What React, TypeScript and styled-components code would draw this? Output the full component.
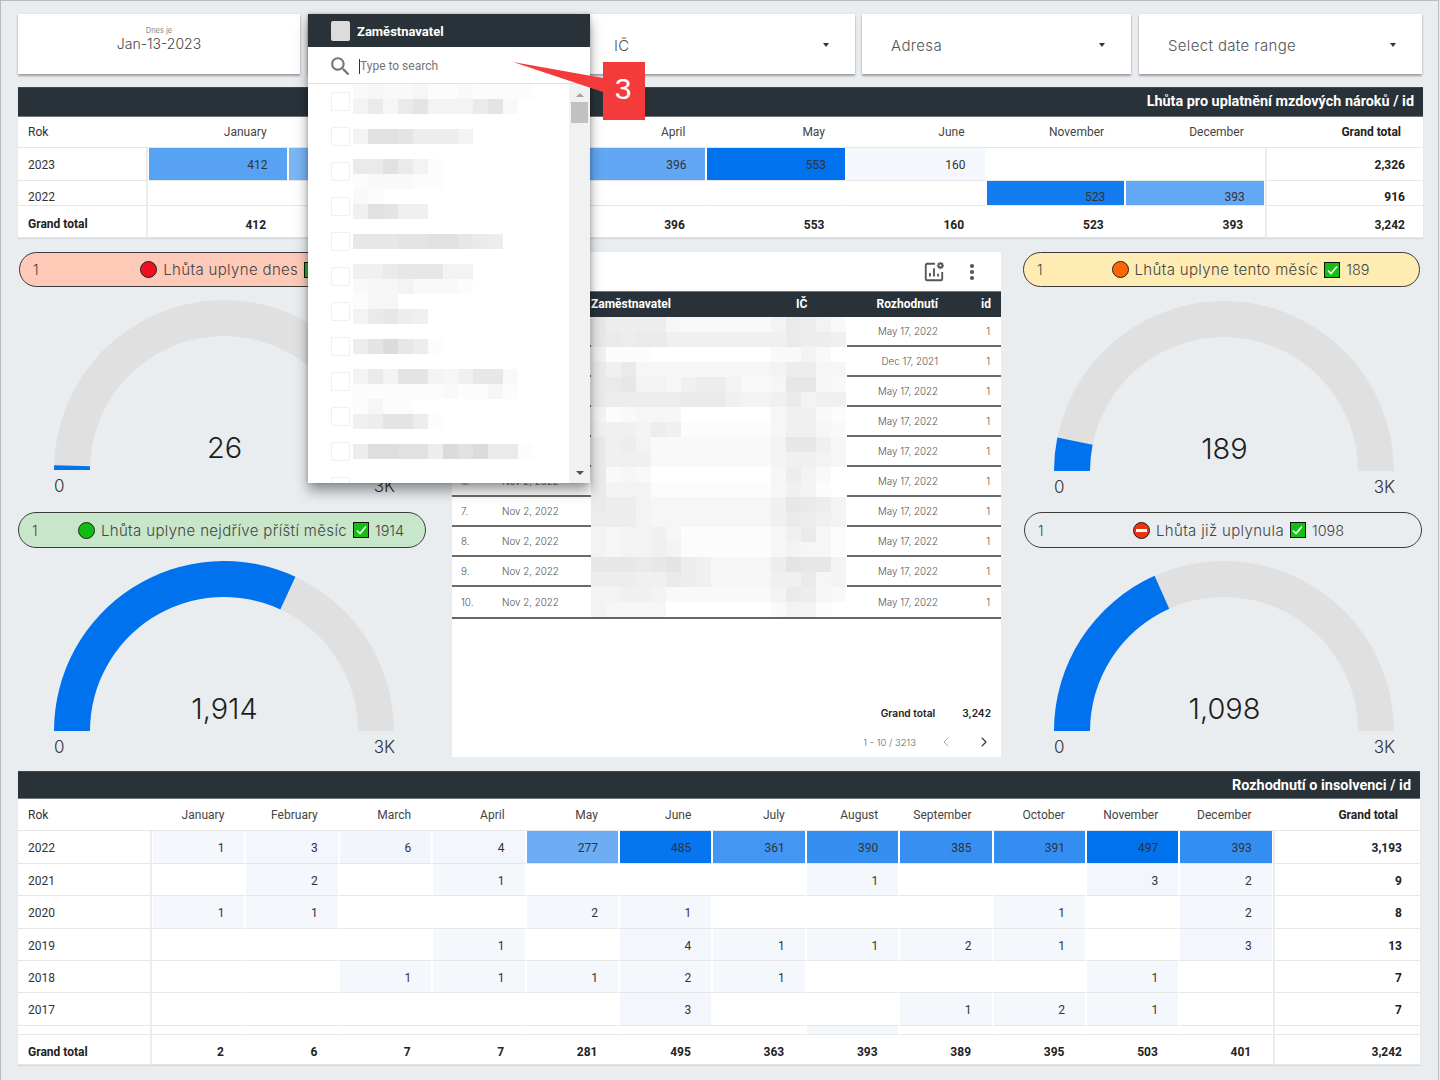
import React from "react";
import styled, { createGlobalStyle } from "styled-components";
import { ChevronLeft, ChevronRight } from "lucide-react";

const GEO = `Inter, "Open Sans", sans-serif`;
const DARK = "#283238";

const Global = createGlobalStyle`
  html, body { margin: 0; padding: 0; background: #eaedf0; }
  body { font-family: Roboto, "Liberation Sans", sans-serif; }
  * { box-sizing: border-box; }
`;

const Page = styled.div`
  position: relative;
  width: 1439px;
  height: 1080px;
  overflow: hidden;
  background: #eaedf0;
  box-shadow: inset 1px 1px 0 #b7bcc0, inset -1px 0 0 #b7bcc0;
  padding: 14px 0 0 18px;
`;

/* ---------- filter bar ---------- */
const FilterBar = styled.div`
  display: flex;
  gap: 7px;
  height: 60px;
  margin-bottom: 13px;
`;
const FilterCard = styled.div<{ $w: number; $ml?: number }>`
  width: ${(p) => p.$w}px;
  margin-left: ${(p) => p.$ml ?? 0}px;
  background: #fff;
  box-shadow: 0 2px 2px rgba(0, 0, 0, 0.32), 0 0 2px rgba(0, 0, 0, 0.08);
  display: flex;
  align-items: center;
  justify-content: space-between;
  padding: 2px 26px 0 29px;
  font-family: ${GEO};
  font-size: 15px;
  font-weight: 300;
  letter-spacing: 0.35px;
  color: #555;
`;
const DateCard = styled.div`
  width: 282px;
  margin-right: 1px;
  background: #fff;
  box-shadow: 0 2px 2px rgba(0, 0, 0, 0.32), 0 0 2px rgba(0, 0, 0, 0.08);
  display: flex;
  flex-direction: column;
  align-items: center;
  padding: 13px 0 0 0;
  font-family: ${GEO};
  color: #444;
`;
const DateCaption = styled.div`
  font-size: 7.5px;
  line-height: 8px;
  color: #888;
`;
const DateValue = styled.div`
  font-size: 14px;
  font-weight: 300;
  line-height: 18px;
`;
const Caret = styled.span`
  width: 0;
  height: 0;
  margin-left: auto;
  border-left: 3.5px solid transparent;
  border-right: 3.5px solid transparent;
  border-top: 4px solid #333;
`;

/* ---------- pivot tables ---------- */
const Pivot = styled.section<{ $w: number }>`
  width: ${(p) => p.$w}px;
  background: #fff;
  box-shadow: 0 1px 1px rgba(0, 0, 0, 0.08);
`;
const PivotTitle = styled.div<{ $h: number; $pb: number }>`
  height: ${(p) => p.$h}px;
  background: ${DARK};
  color: #fff;
  font-weight: 700;
  font-size: 14.4px;
  display: flex;
  align-items: center;
  justify-content: flex-end;
  padding-right: 9px;
  padding-bottom: ${(p) => p.$pb}px;
  border-bottom: 1px solid #6f7477;
  border-top: 1px solid #3c464b;
`;
const PivotRow = styled.div<{ $cols: string; $h: number }>`
  display: grid;
  grid-template-columns: ${(p) => p.$cols};
  height: ${(p) => p.$h}px;
`;
const BaseCell = styled.div<{ $offset?: number }>`
  display: flex;
  align-items: center;
  font-size: 12px;
  color: #333;
  border-bottom: 1px solid #e6e6e6;
  padding-top: ${(p) => p.$offset ?? 0}px;
`;
const HeadCell = styled(BaseCell)`
  justify-content: flex-end;
  padding-right: 21px;
  color: #444;
`;
const HeadTotal = styled(HeadCell)`
  font-weight: 700;
  color: #222;
  padding-right: 22px;
`;
const HeadLabel = styled(BaseCell)`
  padding-left: 10px;
`;
const RowLabel = styled(BaseCell)`
  padding-left: 10px;
  border-right: 2px solid #ececec;
`;
const RowLabelBold = styled(RowLabel)`
  font-weight: 700;
  color: #222;
`;
const HeatCell = styled(BaseCell)<{ $bg: string; $pad: number }>`
  justify-content: flex-end;
  padding-right: ${(p) => p.$pad}px;
  background: ${(p) => p.$bg};
  background-clip: padding-box;
  border-left: 1px solid #fff;
  border-right: 1px solid #fff;
`;
const SumCell = styled(BaseCell)`
  justify-content: flex-end;
  padding-right: 21.5px;
  font-weight: 700;
  color: #222;
  border-bottom-color: #e4e4e4;
`;
const GrandCell = styled(BaseCell)`
  justify-content: flex-end;
  padding-right: 18px;
  font-weight: 700;
  color: #222;
  border-left: 2px solid #ececec;
`;

const heat = (v: number | null, min: number, max: number) => {
  if (v === null) return "#fff";
  const t = Math.max(0, (v - min) / (max - min));
  const mix = (a: number, b: number) => Math.round(a + (b - a) * t);
  return `rgb(${mix(244, 0)},${mix(247, 114)},${mix(252, 238)})`;
};

type PivotData = {
  title: string;
  titleH: number;
  titlePad: number;
  width: number;
  cols: string;
  months: string[];
  headH: number;
  headOff: number;
  cellPad: number;
  min: number;
  max: number;
  rows: { y: string; h: number; off?: number; v: (number | null)[]; sum: string }[];
  total: { h: number; off: number; labelOff: number; v: string[]; sum: string };
};

const PivotTable = ({ d }: { d: PivotData }) => (
  <Pivot $w={d.width}>
    <PivotTitle $h={d.titleH} $pb={d.titlePad}>{d.title}</PivotTitle>
    <PivotRow $cols={d.cols} $h={d.headH}>
      <HeadLabel $offset={d.headOff}>Rok</HeadLabel>
      {d.months.map((m) => (
        <HeadCell key={m} $offset={d.headOff}>{m}</HeadCell>
      ))}
      <HeadTotal $offset={d.headOff}>Grand total</HeadTotal>
    </PivotRow>
    {d.rows.map((r, i) => (
      <PivotRow key={i} $cols={d.cols} $h={r.h}>
        <RowLabel $offset={r.off}>{r.y}</RowLabel>
        {r.v.map((v, j) => (
          <HeatCell key={j} $bg={heat(v, d.min, d.max)} $pad={d.cellPad} $offset={r.off}>
            {r.h > 10 && v !== null ? v : ""}
          </HeatCell>
        ))}
        <GrandCell $offset={r.off}>{r.sum}</GrandCell>
      </PivotRow>
    ))}
    <PivotRow $cols={d.cols} $h={d.total.h}>
      <RowLabelBold $offset={d.total.labelOff}>Grand total</RowLabelBold>
      {d.total.v.map((v, j) => (
        <SumCell key={j} $offset={d.total.off}>{v}</SumCell>
      ))}
      <GrandCell $offset={d.total.off}>{d.total.sum}</GrandCell>
    </PivotRow>
  </Pivot>
);

const _ = null;
const topData: PivotData = {
  title: "Lhůta pro uplatnění mzdových nároků / id",
  titleH: 30,
  titlePad: 2,
  width: 1405,
  cols: "130px repeat(8, 139.6px) 1fr",
  months: ["January", "February", "March", "April", "May", "June", "November", "December"],
  headH: 31,
  headOff: 0,
  cellPad: 19,
  min: 160,
  max: 553,
  rows: [
    { y: "2023", h: 33, off: 1, v: [412, 356, 449, 396, 553, 160, _, _], sum: "2,326" },
    { y: "2022", h: 25, off: 7, v: [_, _, _, _, _, _, 523, 393], sum: "916" },
  ],
  total: { h: 32, off: 7, labelOff: 5, v: ["412", "356", "449", "396", "553", "160", "523", "393"], sum: "3,242" },
};
const bottomData: PivotData = {
  title: "Rozhodnutí o insolvenci / id",
  titleH: 28,
  titlePad: 0,
  width: 1402,
  cols: "134px repeat(12, 93.4px) 1fr",
  months: ["January", "February", "March", "April", "May", "June", "July", "August", "September", "October", "November", "December"],
  headH: 32,
  headOff: 1,
  cellPad: 20,
  min: 1,
  max: 497,
  rows: [
    { y: "2022", h: 33, off: 1, v: [1, 3, 6, 4, 277, 485, 361, 390, 385, 391, 497, 393], sum: "3,193" },
    { y: "2021", h: 32, off: 2, v: [_, 2, _, 1, _, _, _, 1, _, _, 3, 2], sum: "9" },
    { y: "2020", h: 33, off: 1, v: [1, 1, _, _, 2, 1, _, _, _, 1, _, 2], sum: "8" },
    { y: "2019", h: 32, off: 2, v: [_, _, _, 1, _, 4, 1, 1, 2, 1, _, 3], sum: "13" },
    { y: "2018", h: 32, off: 2, v: [_, _, 1, 1, 1, 2, 1, _, _, _, 1, _], sum: "7" },
    { y: "2017", h: 33, off: 1, v: [_, _, _, _, _, 3, _, _, 1, 2, 1, _], sum: "7" },
    { y: "", h: 9, v: [_, _, _, _, _, _, _, 1, _, _, _, _], sum: "" },
  ],
  total: { h: 30, off: 5, labelOff: 4, v: ["2", "6", "7", "7", "281", "495", "363", "393", "389", "395", "503", "401"], sum: "3,242" },
};

/* ---------- middle area ---------- */
const Middle = styled.div`
  display: grid;
  grid-template-columns: 409px 549px 401px;
  column-gap: 25px;
  height: 505px;
  margin: 14px 0;
`;
const GaugeColumn = styled.div<{ $shift?: number }>`
  display: flex;
  flex-direction: column;
  margin-left: ${(p) => p.$shift ?? 0}px;
`;
const Pill = styled.div<{ $bg: string; $w: number; $ml: number; $mt?: number; $h: number }>`
  width: ${(p) => p.$w}px;
  height: ${(p) => p.$h}px;
  margin: ${(p) => p.$mt ?? 0}px 0 0 ${(p) => p.$ml}px;
  flex: none;
  border-radius: 19px;
  border: 1.5px solid #3b3b3b;
  background: ${(p) => p.$bg};
  display: flex;
  align-items: center;
  font-family: ${GEO};
  font-size: 15px;
  font-weight: 300;
  letter-spacing: 0.35px;
  color: #444;
`;
const PillIndex = styled.span`
  width: 40px;
  padding-left: 13px;
  flex: none;
  font-size: 14px;
`;
const PillBody = styled.div<{ $pr?: number }>`
  flex: 1;
  display: flex;
  align-items: center;
  justify-content: center;
  gap: 5px;
  white-space: nowrap;
  padding-right: ${(p) => p.$pr ?? 2}px;
`;
const PillValue = styled.span`
  font-size: 14.4px;
  letter-spacing: 0;
`;
const StatusDot = styled.span<{ $c: string }>`
  width: 17px;
  height: 17px;
  border-radius: 50%;
  background: ${(p) => p.$c};
  border: 1px solid #222;
  display: flex;
  align-items: center;
  justify-content: center;
  margin-right: 1px;
`;
const NoEntryBar = styled.span`
  width: 11px;
  height: 3px;
  background: #fff;
`;
const CheckBox = styled.span`
  width: 16px;
  height: 16px;
  background: #12bf12;
  border: 1px solid #111;
  display: flex;
  align-items: center;
  justify-content: center;
  margin: 0 1px;
`;
const GaugeBlock = styled.div<{ $mt: number; $ml: number }>`
  margin: ${(p) => p.$mt}px 0 0 ${(p) => p.$ml}px;
  width: 341px;
`;
const GaugeDial = styled.div`
  position: relative;
  height: 170px;
  svg { display: block; }
`;
const GaugeValue = styled.div`
  position: absolute;
  left: 0;
  right: 0;
  bottom: 4px;
  text-align: center;
  font-family: ${GEO};
  font-size: 29px;
  line-height: 36px;
  font-weight: 300;
  color: #1d1d1d;
`;
const GaugeScale = styled.div`
  display: flex;
  justify-content: space-between;
  margin-top: 6px;
  font-family: ${GEO};
  font-size: 17px;
  line-height: 20px;
  font-weight: 300;
  color: #333;
`;

const polar = (f: number, r: number) => {
  const a = Math.PI * (1 - f);
  return [170 + r * Math.cos(a), 170 - r * Math.sin(a)];
};
const arc = (a: number, b: number) => {
  const [x1, y1] = polar(a, 170);
  const [x2, y2] = polar(b, 170);
  const [x3, y3] = polar(b, 134);
  const [x4, y4] = polar(a, 134);
  return `M${x1} ${y1}A170 170 0 0 1 ${x2} ${y2}L${x3} ${y3}A134 134 0 0 0 ${x4} ${y4}Z`;
};
const Gauge = ({ value, label, mt, ml }: { value: number; label: string; mt: number; ml: number }) => (
  <GaugeBlock $mt={mt} $ml={ml}>
    <GaugeDial>
      <svg width="340" height="170" viewBox="0 0 340 170">
        <path d={arc(0, 1)} fill="#e0e0e0" />
        <path d={arc(0, value / 3000)} fill="#0072ee" />
      </svg>
      <GaugeValue>{label}</GaugeValue>
    </GaugeDial>
    <GaugeScale>
      <span>0</span>
      <span>3K</span>
    </GaugeScale>
  </GaugeBlock>
);
const Check = () => (
  <svg width="11" height="10" viewBox="0 0 11 10">
    <path d="M1 5.5 4 8.5 10 1.5" fill="none" stroke="#fff" strokeWidth="1.6" />
  </svg>
);

/* ---------- centre table ---------- */
const Panel = styled.section`
  background: #fff;
  display: flex;
  flex-direction: column;
`;
const PanelTools = styled.div`
  height: 39px;
  display: flex;
  align-items: center;
  justify-content: flex-end;
  gap: 24px;
  padding: 0 26px 0 0;
  color: #555;
  svg { display: block; }
`;
const ListHead = styled.div`
  display: grid;
  grid-template-columns: 40px 99px 205px 51px 101px 53px;
  height: 26px;
  background: ${DARK};
  border-top: 1px solid #6f7477;
  padding-bottom: 2px;
  color: #fff;
  font-size: 12px;
  font-weight: 700;
  align-items: center;
`;
const HeadEnd = styled.span<{ $pad: number }>`
  text-align: right;
  padding-right: ${(p) => p.$pad}px;
`;
const ListBody = styled.div`
  border-bottom: 2px solid #666;
`;
const ListRow = styled.div`
  display: grid;
  grid-template-columns: 40px 99px 256px 101px 53px;
  height: 30px;
  svg { display: block; }
`;
const ListCell = styled.div<{ $right?: number; $left?: number }>`
  display: flex;
  align-items: center;
  justify-content: ${(p) => (p.$right !== undefined ? "flex-end" : "flex-start")};
  padding-right: ${(p) => p.$right ?? 0}px;
  padding-left: ${(p) => p.$left ?? 0}px;
  font-family: ${GEO};
  font-size: 9.8px;
  font-weight: 300;
  color: #555;
  border-bottom: 2px solid #6b6b6b;
  ${ListRow}:last-child & { border-bottom: 0; }
`;
const Summary = styled.div`
  margin-top: auto;
  display: flex;
  justify-content: flex-end;
  gap: 27px;
  padding-right: 10px;
  font-family: ${GEO};
  font-size: 10.2px;
  line-height: 14px;
  font-weight: 600;
  color: #222;
`;
const Pager = styled.div`
  height: 30px;
  margin-top: 7px;
  display: flex;
  align-items: center;
  justify-content: flex-end;
  gap: 22px;
  padding: 0 9px 0 0;
  font-family: ${GEO};
  font-size: 9.5px;
  font-weight: 300;
  color: #666;
`;

/* ---------- overlay dropdown ---------- */
const Dropdown = styled.div`
  position: absolute;
  left: 308px;
  top: 14px;
  width: 282px;
  height: 469px;
  background: #fff;
  box-shadow: 0 8px 12px rgba(0, 0, 0, 0.38), 0 0 4px rgba(0, 0, 0, 0.2);
  display: flex;
  flex-direction: column;
  z-index: 5;
`;
const DropHead = styled.div`
  height: 33px;
  flex: none;
  background: ${DARK};
  display: flex;
  align-items: center;
  gap: 7px;
  padding: 1px 0 0 23px;
  color: #fff;
  font-size: 13px;
  font-weight: 700;
`;
const DropHeadBox = styled.span`
  width: 19px;
  height: 20px;
  border-radius: 2px;
  background: #dcdcdc;
`;
const SearchRow = styled.div`
  height: 37px;
  flex: none;
  display: flex;
  align-items: center;
  padding: 2px 0 0 20px;
  gap: 6px;
  color: #757575;
  font-size: 12px;
  border-bottom: 1px solid #e2e2e2;
`;
const SearchText = styled.span`
  border-left: 1px solid #333;
  line-height: 15px;
`;
const DropList = styled.div`
  flex: 1;
  min-height: 0;
  overflow: hidden;
  display: grid;
  grid-template-columns: 45px 216px 21px;
  grid-template-rows: minmax(0, 1fr);
  svg { display: block; }
`;
const BoxColumn = styled.div`
  display: flex;
  flex-direction: column;
  gap: 16px;
  padding: 8px 0 0 23px;
  overflow: hidden;
`;
const OptionBox = styled.span`
  width: 19px;
  height: 19px;
  flex: none;
  border: 1px solid #f0f0f0;
  border-radius: 2px;
  box-shadow: 0 0 1px rgba(0, 0, 0, 0.05);
`;
const ScrollTrack = styled.div`
  background: #f1f1f1;
  display: flex;
  flex-direction: column;
  align-items: center;
  padding: 9px 0 8px;
`;
const ScrollThumb = styled.div`
  width: 17px;
  height: 21px;
  margin-top: 5px;
  background: #c1c1c1;
`;
const ScrollUp = styled.span`
  width: 0;
  height: 0;
  border-left: 4.5px solid transparent;
  border-right: 4.5px solid transparent;
  border-bottom: 4.5px solid #a3a3a3;
`;
const ScrollDown = styled.span`
  width: 0;
  height: 0;
  margin-top: auto;
  border-left: 4.5px solid transparent;
  border-right: 4.5px solid transparent;
  border-top: 4.5px solid #505050;
`;

/* ---------- annotation ---------- */
const ArrowShape = styled.svg`
  position: absolute;
  left: 513px;
  top: 62px;
  z-index: 6;
`;
const Badge = styled.div`
  position: absolute;
  left: 603px;
  top: 62px;
  width: 42px;
  height: 58px;
  padding: 0 2px 4px 0;
  background: #f43b3b;
  color: #fff;
  font-family: "Liberation Sans", Arial, sans-serif;
  font-size: 30px;
  display: flex;
  align-items: center;
  justify-content: center;
  z-index: 6;
`;

/* ---------- mosaics (pixelated redaction) ---------- */
const Mosaic = ({ lines, w }: { lines: string[]; w: number }) => (
  <svg width={w} height={lines.length * 15} viewBox={`0 0 ${w} ${lines.length * 15}`} shapeRendering="crispEdges">
    {lines.flatMap((l, y) =>
      l.split("").map((ch, x) => {
        const n = parseInt(ch, 16);
        if (!n) return null;
        const g = 255 - n * 3;
        return <rect key={`${y}-${x}`} x={x * 15} y={y * 15} width="15" height="15" fill={`rgb(${g},${g},${g})`} />;
      })
    )}
  </svg>
);

const rowMosaics = [
  ["86666322222247642", "87677555555557665"],
  ["51110000000022420", "75733333333346633"],
  ["77844356642238832", "76666677754457455"],
  ["41233300000035521", "55546511111135532"],
  ["75642222222248853", "75552222222245543"],
  ["72320000000036420", "74441111111135410"],
  ["76643333333358764", "66643333333357654"],
  ["43445311111135731", "43445411111134331"],
  ["88878965333369884", "66655765333355734"],
  ["44554222222247632", "43333000000024410"],
];

const dropMosaic = [
  "232231121111",
  "47379444792",
  "",
  "4aa96664",
  "",
  "77a741",
  "122211",
  "21",
  "5a955",
  "",
  "88899aa876",
  "",
  "55788844",
  "23342221",
  "133",
  "47865",
  "",
  "69c861",
  "",
  "47499435882",
  "11111121131",
  "1311",
  "569961",
  "",
  "6bbaa6cac771",
];

const rows = Array.from({ length: 10 }, (_v, i) => ({
  n: `${i + 1}.`,
  date: i === 1 ? "Dec 17, 2021" : "May 17, 2022",
}));

export default function App() {
  return (
    <Page>
      <Global />
      <FilterBar>
        <DateCard>
          <DateCaption>Dnes je</DateCaption>
          <DateValue>Jan-13-2023</DateValue>
        </DateCard>
        <FilterCard $w={270}>
          <Caret />
        </FilterCard>
        <FilterCard $w={270}>
          <span>IČ</span>
          <Caret />
        </FilterCard>
        <FilterCard $w={269}>
          <span>Adresa</span>
          <Caret />
        </FilterCard>
        <FilterCard $w={283} $ml={1}>
          <span>Select date range</span>
          <Caret />
        </FilterCard>
      </FilterBar>

      <PivotTable d={topData} />

      <Middle>
        <GaugeColumn>
          <Pill $bg="#ffc9b8" $w={408} $ml={1} $h={35}>
            <PillIndex>1</PillIndex>
            <PillBody>
              <StatusDot $c="#ee1122" />
              <span>Lhůta uplyne dnes</span>
              <CheckBox><Check /></CheckBox>
              <PillValue>26</PillValue>
            </PillBody>
          </Pill>
          <Gauge value={26} label="26" mt={13} ml={36} />
          <Pill $bg="#c8e6c9" $w={408} $ml={0} $h={36} $mt={16}>
            <PillIndex>1</PillIndex>
            <PillBody>
              <StatusDot $c="#11bb11" />
              <span>Lhůta uplyne nejdříve příští měsíc</span>
              <CheckBox><Check /></CheckBox>
              <PillValue>1914</PillValue>
            </PillBody>
          </Pill>
          <Gauge value={1914} label="1,914" mt={13} ml={36} />
        </GaugeColumn>

        <Panel>
          <PanelTools>
            <svg width="22" height="22" viewBox="0 0 24 24" fill="none" stroke="currentColor" strokeWidth="2">
              <path d="M13 3H4.5A1.5 1.5 0 0 0 3 4.5v15A1.5 1.5 0 0 0 4.5 21h15a1.5 1.5 0 0 0 1.5-1.5V12" />
              <path d="M7.5 17v-4M12 17V8M16.5 17v-3" />
              <circle cx="19" cy="5" r="2.2" strokeWidth="2.2" />
              <path d="M19 1v1M19 8v1M15 5h1M22 5h1M16.2 2.2l.7.7M21.1 7.1l.7.7M16.2 7.8l.7-.7M21.1 2.9l.7-.7" strokeWidth="1.4" />
            </svg>
            <svg width="6" height="18" viewBox="0 0 6 18" fill="currentColor">
              <circle cx="3" cy="3" r="2.1" />
              <circle cx="3" cy="9" r="2.1" />
              <circle cx="3" cy="15" r="2.1" />
            </svg>
          </PanelTools>
          <ListHead>
            <span />
            <span />
            <span>Zaměstnavatel</span>
            <span>IČ</span>
            <HeadEnd $pad={10}>Rozhodnutí</HeadEnd>
            <HeadEnd $pad={10}>id</HeadEnd>
          </ListHead>
          <ListBody>
            {rows.map((r, i) => (
              <ListRow key={r.n}>
                <ListCell $left={9}>{r.n}</ListCell>
                <ListCell $left={10}>Nov 2, 2022</ListCell>
                <Mosaic lines={rowMosaics[i]} w={256} />
                <ListCell $right={10}>{r.date}</ListCell>
                <ListCell $right={11}>1</ListCell>
              </ListRow>
            ))}
          </ListBody>
          <Summary>
            <span>Grand total</span>
            <span>3,242</span>
          </Summary>
          <Pager>
            <span>1 - 10 / 3213</span>
            <ChevronLeft size={16} strokeWidth={1.3} color="#9a9a9a" />
            <ChevronRight size={16} strokeWidth={1.6} color="#333" />
          </Pager>
        </Panel>

        <GaugeColumn $shift={-4}>
          <Pill $bg="#feecb3" $w={397} $ml={1} $h={35}>
            <PillIndex>1</PillIndex>
            <PillBody>
              <StatusDot $c="#ff6600" />
              <span>Lhůta uplyne tento měsíc</span>
              <CheckBox><Check /></CheckBox>
              <PillValue>189</PillValue>
            </PillBody>
          </Pill>
          <Gauge value={189} label="189" mt={14} ml={32} />
          <Pill $bg="transparent" $w={398} $ml={2} $h={36} $mt={15}>
            <PillIndex>1</PillIndex>
            <PillBody $pr={9}>
              <StatusDot $c="#ee3311"><NoEntryBar /></StatusDot>
              <span>Lhůta již uplynula</span>
              <CheckBox><Check /></CheckBox>
              <PillValue>1098</PillValue>
            </PillBody>
          </Pill>
          <Gauge value={1098} label="1,098" mt={13} ml={32} />
        </GaugeColumn>
      </Middle>

      <PivotTable d={bottomData} />

      <Dropdown>
        <DropHead>
          <DropHeadBox />
          <span>Zaměstnavatel</span>
        </DropHead>
        <SearchRow>
          <svg width="25" height="25" viewBox="0 0 24 24" fill="#757575">
            <path d="M15.5 14h-.79l-.28-.27C15.41 12.59 16 11.11 16 9.5 16 5.91 13.09 3 9.5 3S3 5.91 3 9.5 5.91 16 9.5 16c1.61 0 3.09-.59 4.23-1.57l.27.28v.79l5 4.99L20.49 19l-4.99-5zm-6 0C7.01 14 5 11.99 5 9.5S7.01 5 9.5 5 14 7.01 14 9.5 11.99 14 9.5 14z" />
          </svg>
          <SearchText>Type to search</SearchText>
        </SearchRow>
        <DropList>
          <BoxColumn>
            {Array.from({ length: 12 }, (_v, i) => (
              <OptionBox key={i} />
            ))}
          </BoxColumn>
          <Mosaic lines={dropMosaic} w={216} />
          <ScrollTrack>
            <ScrollUp />
            <ScrollThumb />
            <ScrollDown />
          </ScrollTrack>
        </DropList>
      </Dropdown>

      <ArrowShape width="90" height="32" viewBox="0 0 90 32">
        <polygon points="0,0 90,16 90,30" fill="#f43b3b" />
      </ArrowShape>
      <Badge>3</Badge>
    </Page>
  );
}
